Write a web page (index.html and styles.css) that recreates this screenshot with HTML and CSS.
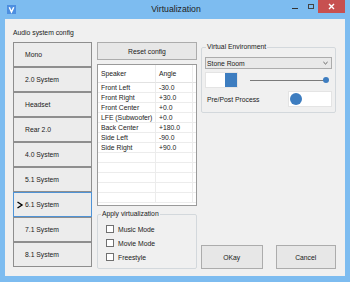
FILE: index.html
```html
<!DOCTYPE html>
<html lang="en">
<head>
  <meta charset="UTF-8">
  <title>Virtualization</title>
  <link rel="stylesheet" href="styles.css">
</head>
<body>
  <div class="window">

    <!-- Title bar -->
    <div class="titlebar">
      <svg class="app-icon" viewBox="0 0 9 9" xmlns="http://www.w3.org/2000/svg">
        <rect x="0" y="0" width="9" height="9" fill="#4d8fe0"/>
        <path d="M2.3 2.2 L4.5 7 L6.7 2.2" fill="none" stroke="#fff" stroke-width="1.5"/>
      </svg>
      <div class="title">Virtualization</div>
      <div class="controls">
        <div class="ctl">
          <svg viewBox="0 0 16 13" xmlns="http://www.w3.org/2000/svg"><rect x="6" y="8" width="6" height="1" fill="#333"/></svg>
        </div>
        <div class="ctl">
          <svg viewBox="0 0 16 13" xmlns="http://www.w3.org/2000/svg"><rect x="6.5" y="4.5" width="5" height="4" fill="none" stroke="#444" stroke-width="1"/></svg>
        </div>
        <div class="ctl close">
          <svg viewBox="0 0 27 13" xmlns="http://www.w3.org/2000/svg"><path d="M11 4 L16 9 M16 4 L11 9" stroke="#fff" stroke-width="1.4"/></svg>
        </div>
      </div>
    </div>

    <!-- Client area -->
    <div class="client">

      <!-- Left: speaker systems -->
      <div class="col-left">
        <div class="caption">Audio system config</div>
        <div class="systems">
          <div class="sys"><span class="mark"></span>Mono</div>
          <div class="sys"><span class="mark"></span>2.0 System</div>
          <div class="sys"><span class="mark"></span>Headset</div>
          <div class="sys"><span class="mark"></span>Rear 2.0</div>
          <div class="sys"><span class="mark"></span>4.0 System</div>
          <div class="sys"><span class="mark"></span>5.1 System</div>
          <div class="sys selected">
            <span class="mark">
              <svg viewBox="0 0 8 8" xmlns="http://www.w3.org/2000/svg"><path d="M0.5 1 L5 4 L0.5 7" fill="none" stroke="#000" stroke-width="1.4"/></svg>
            </span>6.1 System
          </div>
          <div class="sys"><span class="mark"></span>7.1 System</div>
          <div class="sys"><span class="mark"></span>8.1 System</div>
        </div>
      </div>

      <!-- Middle: speaker angles -->
      <div class="col-mid">
        <div class="btn reset">Reset config</div>

        <div class="list">
          <div class="row head"><span>Speaker</span><span>Angle</span><span></span></div>
          <div class="row"><span>Front Left</span><span>-30.0</span><span></span></div>
          <div class="row"><span>Front Right</span><span>+30.0</span><span></span></div>
          <div class="row"><span>Front Center</span><span>+0.0</span><span></span></div>
          <div class="row"><span>LFE (Subwoofer)</span><span>+0.0</span><span></span></div>
          <div class="row"><span>Back Center</span><span>+180.0</span><span></span></div>
          <div class="row"><span>Side Left</span><span>-90.0</span><span></span></div>
          <div class="row"><span>Side Right</span><span>+90.0</span><span></span></div>
          <div class="row"><span></span><span></span><span></span></div>
          <div class="row"><span></span><span></span><span></span></div>
          <div class="row"><span></span><span></span><span></span></div>
          <div class="row"><span></span><span></span><span></span></div>
          <div class="row"><span></span><span></span><span></span></div>
        </div>

        <fieldset class="group apply">
          <legend>Apply virtualization</legend>
          <div class="check"><span class="box"></span>Music Mode</div>
          <div class="check"><span class="box"></span>Movie Mode</div>
          <div class="check"><span class="box"></span>Freestyle</div>
        </fieldset>
      </div>

      <!-- Right: environment + dialog buttons -->
      <div class="col-right">
        <fieldset class="group env">
          <legend>Virtual Environment</legend>
          <div class="combo">
            <span>Stone Room</span>
            <svg viewBox="0 0 6 4" xmlns="http://www.w3.org/2000/svg"><path d="M0.5 0.8 L3 3.2 L5.5 0.8" fill="none" stroke="#333" stroke-width="0.9"/></svg>
          </div>
          <div class="env-row">
            <div class="toggle on"><span class="knob"></span></div>
            <div class="slider"><span class="track"></span><span class="thumb"></span></div>
          </div>
          <div class="env-row">
            <div class="env-label">Pre/Post Process</div>
            <div class="toggle round"><span class="dot"></span></div>
          </div>
        </fieldset>

        <div class="actions">
          <div class="btn ok">OKay</div>
          <div class="btn cancel">Cancel</div>
        </div>
      </div>

    </div>
  </div>
</body>
</html>
```

FILE: styles.css
```css
/* === Palette === */
:root {
  --frame: #7dbcf0;
  --client: #f0f0f0;
  --close: #c75050;
  --btn-bg: #e7e7e7;
  --btn-border: #acacac;
  --sys-border: #8e8e8e;
  --select: #4f93d6;
  --group-line: #d3d8dc;
  --grid-line: #ececec;
  --accent: #3d7dc0;
  --text: #1a1a1a;
}

* {
  box-sizing: border-box;
  margin: 0;
  padding: 0;
}
html, body {
  width: 350px;
  height: 282px;
  overflow: hidden;
}
body {
  font-family: "Liberation Sans", Arial, sans-serif;
  font-size: 6.8px;
  color: var(--text);
  background: var(--frame);
}

/* === Window frame === */
.window {
  display: flex;
  flex-direction: column;
  height: 282px;
  padding: 0 5px 6px;
  background: var(--frame);
}

.titlebar {
  display: grid;
  grid-template-columns: 1fr auto 1fr;
  align-items: start;
  height: 19px;
  margin: 0 -5px;
  padding: 0 5px 0 7px;
}
.app-icon {
  width: 9px;
  height: 9px;
  margin-top: 5px;
}
.title {
  font-size: 8.7px;
  line-height: 19px;
  color: #222;
}
.controls {
  justify-self: end;
  display: flex;
}
.ctl {
  width: 16px;
  height: 13px;
}
.ctl svg {
  display: block;
  width: 100%;
  height: 100%;
}
.ctl.close {
  width: 27px;
  background: var(--close);
}

/* === Client area === */
.client {
  flex: 1;
  display: flex;
  padding-left: 8px;
  background: var(--client);
}

/* Left column */
.col-left {
  width: 79px;
  margin-right: 5px;
}
.caption {
  height: 23px;
  padding-top: 8px;
  line-height: 12px;
}
.sys {
  display: flex;
  align-items: center;
  height: 25px;
  padding-left: 3px;
  border: 1px solid var(--sys-border);
  background: #ececec;
}
.sys.selected {
  border-color: var(--select);
}
.mark {
  width: 8px;
  height: 8px;
  flex: none;
}
.mark svg {
  display: block;
  width: 8px;
  height: 8px;
}

/* Middle column */
.col-mid {
  width: 100px;
  margin-right: 4px;
  padding-top: 23px;
  display: flex;
  flex-direction: column;
}
.btn {
  display: flex;
  align-items: center;
  justify-content: center;
  border: 1px solid var(--btn-border);
  background: var(--btn-bg);
}
.reset {
  height: 18px;
}

.list {
  height: 142px;
  margin-top: 4px;
  border: 1px solid #9a9a9a;
  background: #fff;
  overflow: hidden;
}
.row {
  display: grid;
  grid-template-columns: 58px 37px 1fr;
  height: 10px;
  line-height: 9px;
}
.row span {
  padding-left: 3px;
  border-right: 1px solid var(--grid-line);
  border-bottom: 1px solid var(--grid-line);
  white-space: nowrap;
}
.row.head {
  height: 18px;
  line-height: 17px;
}
.row.head span {
  border-bottom-color: #e2e2e2;
}

/* Group boxes */
.group {
  border: 1px solid var(--group-line);
  border-radius: 2px;
  min-width: 0;
}
.group legend {
  padding: 0 1px;
  line-height: 10px;
}

.apply {
  height: 60px;
  margin-top: 3px;
  padding: 3px 0 0 8px;
}
.apply legend {
  margin-left: -5px;
}
.check {
  display: flex;
  align-items: center;
  height: 14px;
}
.box {
  width: 8px;
  height: 8px;
  margin-right: 4px;
  border: 1px solid #707070;
  background: #fff;
}

/* Right column */
.col-right {
  width: 135px;
  padding: 23px 0 7px;
  display: flex;
  flex-direction: column;
}
.env {
  padding: 5px 3px 5px 3px;
}
.env legend {
  margin-left: 1px;
}
.combo {
  display: flex;
  align-items: center;
  justify-content: space-between;
  height: 12px;
  padding: 0 3px 0 1px;
  border: 1px solid var(--btn-border);
  background: #e9e9e9;
}
.combo svg {
  width: 5px;
  height: 4px;
}

.env-row {
  display: flex;
  align-items: center;
  height: 16px;
  margin-top: 3px;
}
.toggle {
  display: flex;
  height: 16px;
  border: 1px solid #e4e4e4;
  background: #fff;
}
.toggle.on {
  width: 33px;
  justify-content: flex-end;
}
.knob {
  width: 12px;
  height: 100%;
  background: var(--accent);
}
.toggle.round {
  width: 44px;
  margin-left: auto;
  align-items: center;
  padding-left: 1px;
}
.dot {
  width: 12px;
  height: 12px;
  border-radius: 50%;
  background: var(--accent);
}

.slider {
  flex: 1;
  display: flex;
  align-items: center;
  margin: 0 3px 0 12px;
}
.track {
  flex: 1;
  height: 1px;
  background: #7a7a7a;
}
.thumb {
  width: 6px;
  height: 6px;
  margin-left: -3px;
  border-radius: 50%;
  background: var(--accent);
}
.env-label {
  padding-left: 2px;
}

.actions {
  margin-top: auto;
  display: flex;
  gap: 13px;
}
.ok,
.cancel {
  height: 24px;
}
.ok {
  width: 62px;
}
.cancel {
  width: 61px;
}
```
